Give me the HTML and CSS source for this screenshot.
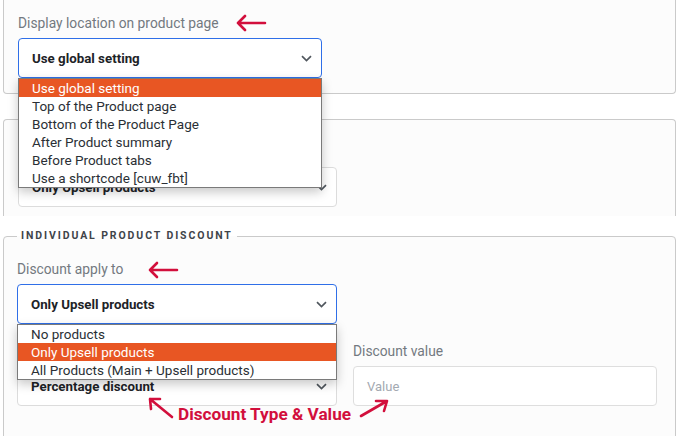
FILE: index.html
```html
<!DOCTYPE html>
<html>
<head>
<meta charset="utf-8">
<link rel="stylesheet" href="styles.css">
</head>
<body>
<div class="page">
  <div class="panel panel-top">
    <div class="label">Display location on product page</div>
    <div class="field w304">
      <div class="select active">
        <span>Use global setting</span>
        <svg class="chev" width="11" height="7" viewBox="0 0 11 7"><path d="M1 1.2l4.5 4.3 4.5-4.3" fill="none" stroke="#50575e" stroke-width="1.7"/></svg>
      </div>
      <ul class="menu">
        <li class="sel">Use global setting</li>
        <li>Top of the Product page</li>
        <li>Bottom of the Product Page</li>
        <li>After Product summary</li>
        <li>Before Product tabs</li>
        <li>Use a shortcode [cuw_fbt]</li>
      </ul>
    </div>
  </div>

  <div class="panel panel-mid">
    <div class="field w319">
      <div class="select">
        <span>Only Upsell products</span>
        <svg class="chev" width="11" height="7" viewBox="0 0 11 7"><path d="M1 1.2l4.5 4.3 4.5-4.3" fill="none" stroke="#50575e" stroke-width="1.7"/></svg>
      </div>
    </div>
  </div>

  <fieldset class="panel panel-disc">
    <legend>INDIVIDUAL PRODUCT DISCOUNT</legend>
    <div class="label">Discount apply to</div>
    <div class="field w320">
      <div class="select active">
        <span>Only Upsell products</span>
        <svg class="chev" width="11" height="7" viewBox="0 0 11 7"><path d="M1 1.2l4.5 4.3 4.5-4.3" fill="none" stroke="#50575e" stroke-width="1.7"/></svg>
      </div>
      <ul class="menu">
        <li>No products</li>
        <li class="sel">Only Upsell products</li>
        <li>All Products (Main + Upsell products)</li>
      </ul>
    </div>
    <div class="row">
      <div class="col w320">
        <div class="label">&nbsp;</div>
        <div class="select">
          <span>Percentage discount</span>
          <svg class="chev" width="11" height="7" viewBox="0 0 11 7"><path d="M1 1.2l4.5 4.3 4.5-4.3" fill="none" stroke="#50575e" stroke-width="1.7"/></svg>
        </div>
      </div>
      <div class="col w304">
        <div class="label">Discount value</div>
        <div class="input">Value</div>
      </div>
    </div>
  </fieldset>

  <svg class="arrows" width="677" height="436" viewBox="0 0 677 436">
    <g fill="none" stroke="#d20f3c" stroke-width="2.6" stroke-linecap="round" stroke-linejoin="round">
      <path d="M238 23H265M245 16l-7 7 7 7"/>
      <path d="M150 270H177M157 263l-7 7 7 7"/>
      <path d="M172 417L150 399M150 399h10M150 399l1 10"/>
      <path d="M361 416L387 401M387 401h-11M387 401l-3 10"/>
    </g>
  </svg>
  <div class="note">Discount Type &amp; Value</div>
</div>
</body>
</html>
```

FILE: styles.css
```css
* { box-sizing: border-box; }
html, body { margin: 0; padding: 0; background: #ffffff; }
body {
  font-family: Roboto, "Liberation Sans", Arial, sans-serif;
  color: #1d2327;
  width: 677px;
  height: 436px;
  overflow: hidden;
}
.page { position: relative; width: 677px; height: 436px; }

.panel {
  margin: 0 1px 0 3px;
  border: 1px solid #cacaca;
  border-radius: 4px;
  background: #fcfcfc;
}
.panel-top {
  border-top: none;
  border-radius: 0 0 4px 4px;
  padding: 14px 14px 15px 14px;
  height: 94px;
}
.panel-mid {
  margin-top: 25px;
  border-bottom: none;
  border-radius: 4px 4px 0 0;
  padding: 47px 14px 0 14px;
  height: 97px;
}
.panel-disc {
  margin-top: 13px;
  padding: 0 17px 0 13px;
  height: 220px;
  min-width: 0;
}
legend {
  padding: 0 4px;
  font-size: 10.5px;
  line-height: 14px;
  font-weight: 700;
  letter-spacing: 1.9px;
  color: #3f444a;
}

.label {
  font-size: 13.8px;
  line-height: 18px;
  color: #737980;
  margin-bottom: 6px;
}
.panel-disc > .label { margin-top: 17px; }

.field { position: relative; }
.w304 { width: 304px; }
.w319 { width: 319px; }
.w320 { width: 320px; }

.select {
  height: 40px;
  border: 1px solid #dcdcdc;
  border-radius: 4px;
  background: #ffffff;
  display: flex;
  align-items: center;
  justify-content: space-between;
  padding: 0 9px 0 13px;
  font-size: 13.3px;
  font-weight: 700;
  color: #1d2327;
}
.select.active { border-color: #2f6fe8; }
.chev { flex: none; }

.menu {
  position: absolute;
  top: 100%;
  left: 0;
  right: 0;
  margin: 0;
  padding: 0;
  list-style: none;
  background: #ffffff;
  border: 1px solid #7a7a7a;
  box-shadow: 0 4px 10px rgba(0, 0, 0, 0.22);
  z-index: 5;
}
.menu li {
  height: 18px;
  line-height: 18px;
  padding-left: 13px;
  font-size: 13.5px;
  color: #2a2f35;
  white-space: nowrap;
}
.menu li.sel { background: #e85623; color: #ffffff; }

.row { display: flex; gap: 16px; margin-top: 18px; }
.col .label { margin-bottom: 6px; }
.input {
  height: 40px;
  border: 1px solid #dedede;
  border-radius: 4px;
  background: #ffffff;
  display: flex;
  align-items: center;
  padding-left: 13px;
  font-size: 13px;
  color: #a3a9b1;
}

.arrows { position: absolute; left: 0; top: 0; pointer-events: none; z-index: 10; }
.note {
  position: absolute;
  left: 178px;
  top: 404px;
  font-size: 17.2px;
  line-height: 20px;
  font-weight: 700;
  color: #d20f3c;
  z-index: 10;
}
```
